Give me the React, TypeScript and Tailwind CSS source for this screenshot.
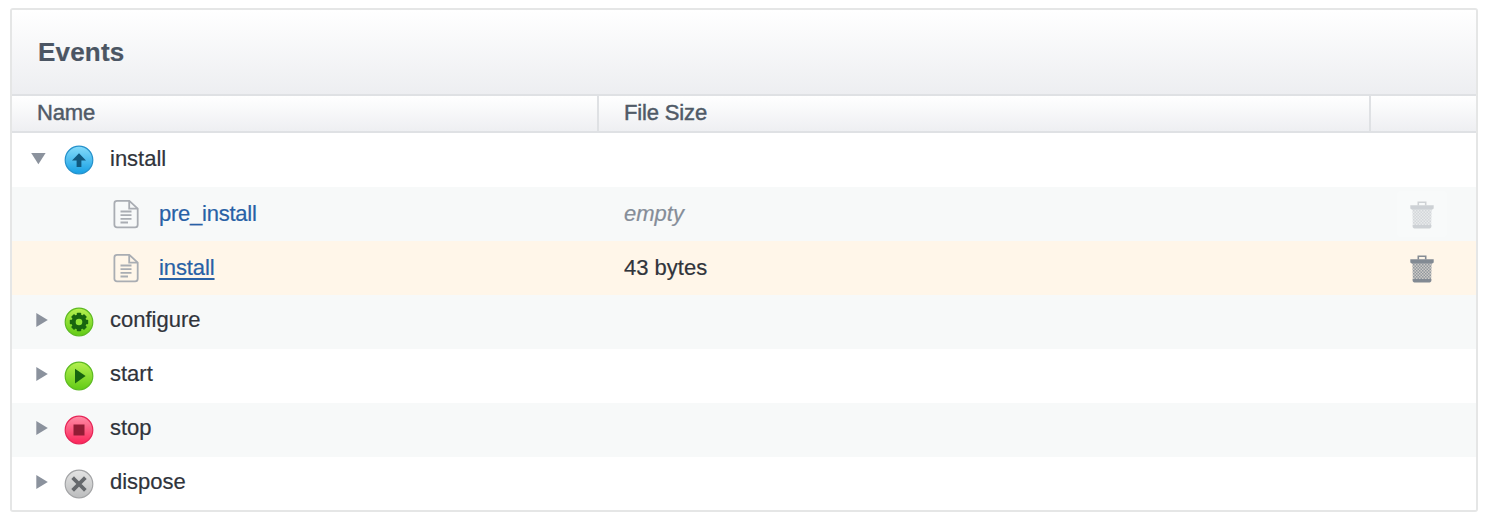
import React from "react";

type Kind = "install" | "configure" | "start" | "stop" | "dispose";

const palette: Record<Kind, { top: string; bottom: string; ring: string; mark: string }> = {
  install: { top: "#86dcfb", bottom: "#169fe4", ring: "#2591cb", mark: "#10587f" },
  configure: { top: "#b5f050", bottom: "#62cb15", ring: "#5dba22", mark: "#17640f" },
  start: { top: "#b5f050", bottom: "#62cb15", ring: "#5dba22", mark: "#17640f" },
  stop: { top: "#ff8ca5", bottom: "#fb2459", ring: "#e62557", mark: "#931c35" },
  dispose: { top: "#e3e3e3", bottom: "#bcbdbe", ring: "#a3a4a6", mark: "#65686c" },
};

function Mark({ kind, color }: { kind: Kind; color: string }) {
  switch (kind) {
    case "install":
      return <path d="M15 8.3l7 7.2h-4.6v6.6h-4.8v-6.6H8z" fill={color} />;
    case "configure":
      return (
        <g>
          {[0, 45, 90, 135].map((a) => (
            <rect key={a} x="12.8" y="5.8" width="4.4" height="18.4" rx="0.8" fill={color} transform={`rotate(${a} 15 15)`} />
          ))}
          <circle cx="15" cy="15" r="7.5" fill={color} />
          <circle cx="15" cy="15" r="3.3" fill="#8fe337" />
        </g>
      );
    case "start":
      return <path d="M11 7.8l10.6 7.2L11 22.4z" fill={color} />;
    case "stop":
      return <path d="M9.5 9.4h11v11h-11z" fill={color} />;
    case "dispose":
      return <path d="M10 10l10 10M20 10L10 20" stroke={color} strokeWidth="3.8" strokeLinecap="square" />;
  }
}

function StatusIcon({ kind }: { kind: Kind }) {
  const p = palette[kind];
  return (
    <svg viewBox="0 0 30 30" className="size-[30px] shrink-0">
      <defs>
        <linearGradient id={`disc-${kind}`} x1="0" y1="0" x2="0" y2="1">
          <stop offset="0" stopColor={p.top} />
          <stop offset="1" stopColor={p.bottom} />
        </linearGradient>
      </defs>
      <circle cx="15" cy="15" r="13.8" fill={`url(#disc-${kind})`} stroke={p.ring} strokeWidth="1.2" />
      <Mark kind={kind} color={p.mark} />
    </svg>
  );
}

function FileIcon() {
  return (
    <svg viewBox="0 0 26 30" className="h-[30px] w-[26px] shrink-0" fill="none" stroke="#a9adb3" strokeWidth="1.8">
      <path d="M4 1.8h12.3l8.4 7.9v16c0 1.6-1 2.6-2.6 2.6H4c-1.6 0-2.6-1-2.6-2.6V4.4c0-1.6 1-2.6 2.6-2.6z" />
      <path d="M16.2 2v7.7h8.3" />
      <path d="M7.5 12.5h11M7.5 16.2h11M7.5 19.9h11M7.5 23.5h7.5" />
    </svg>
  );
}

function TrashIcon({ id }: { id: string }) {
  return (
    <svg viewBox="0 0 24 28" className="h-7 w-6">
      <defs>
        <pattern id={id} width="3" height="3" patternUnits="userSpaceOnUse">
          <path d="M0 0h3v3H0z" fill="#828a93" fillOpacity="0.4" />
          <path d="M0 0h1.5v1.5H0zM1.5 1.5H3V3H1.5z" fill="#828a93" fillOpacity="0.8" />
        </pattern>
      </defs>
      <path d="M8.3 4.5V1.2h7.4v3.3" fill="none" stroke="#858c94" strokeWidth="1.6" />
      <path d="M.3 4.3h23.4v3.2l-1.8 1.3H2.1L.3 7.5z" fill="#828a93" />
      <path d="M2.4 8.8h19.2l-.4 15.4H2.8z" fill={`url(#${id})`} />
      <path d="M2.6 24h18.8v1.6c0 1-.8 1.8-1.8 1.8H4.4c-1 0-1.8-.8-1.8-1.8z" fill="#828a93" />
    </svg>
  );
}

function Arrow({ open }: { open?: boolean }) {
  return (
    <svg viewBox="0 0 18 16" className="mb-1 h-4 w-[18px] shrink-0" fill="#8b929d">
      {open ? <path d="M1.2 3h14.4L8.4 14.3z" /> : <path d="M6.3 1v14l11.5-7z" />}
    </svg>
  );
}

function GroupRow({ kind, open, shaded }: { kind: Kind; open?: boolean; shaded?: boolean }) {
  return (
    <div className={`flex h-[54px] items-center pl-[18px] ${shaded ? "bg-[#f7f9f9]" : "bg-white"}`}>
      <Arrow open={open} />
      <div className="ml-4">
        <StatusIcon kind={kind} />
      </div>
      <span className={`ml-4 leading-[26px] ${open ? "pb-[3px]" : "pb-[5px]"}`}>{kind}</span>
    </div>
  );
}

function FileRow({ name, size, active }: { name: string; size?: string; active?: boolean }) {
  return (
    <div className={`grid h-[54px] grid-cols-[586px_771px_1fr] items-center ${active ? "bg-[#fff6e9]" : "bg-[#f7f9f9]"}`}>
      <div className="flex items-center pl-[101px]">
        <FileIcon />
        <span
          className={`ml-5 pb-px leading-[26px] text-[#2861a6] ${
            active ? "tracking-[-0.1px] underline decoration-2 underline-offset-[3px]" : "tracking-[-0.25px]"
          }`}
        >
          {name}
        </span>
      </div>
      <div className="pb-px pl-[26px] leading-[26px]">
        {size ?? <em className="text-[#858d98]">empty</em>}
      </div>
      <div
        className={`ml-[28px] flex h-[46px] w-[50px] items-center justify-center rounded-sm pt-0.5 ${
          active ? "" : "bg-[#fcfdfd] opacity-35"
        }`}
      >
        <TrashIcon id={`mesh-${name}`} />
      </div>
    </div>
  );
}

export default function App() {
  return (
    <div className="h-[522px] w-[1486px] bg-white pt-2 pl-[10px] font-['Liberation_Sans',Arial,sans-serif] text-[22px] text-[#30343b] [-webkit-text-stroke:0.2px_currentColor]">
      <section className="h-[504px] w-[1468px] overflow-hidden rounded-[3px] border-2 border-[#e5e6e6]">
        <header className="flex h-[84px] items-center bg-linear-to-b from-white to-[#edeef1] pl-[26px]">
          <h1 className="text-[26px] leading-8 font-bold tracking-[0.2px] text-[#4b5563]">Events</h1>
        </header>
        <div className="grid h-[39px] grid-cols-[585px_772px_1fr] border-y-2 border-[#dfe1e4] bg-linear-to-b from-white to-[#eeeff2] leading-[34px] tracking-[-0.15px] text-[#505a67] [-webkit-text-stroke:0.45px_#505a67]">
          <div className="pl-[25px]">Name</div>
          <div className="border-l-2 border-[#dfe1e4] pl-[25px]">File Size</div>
          <div className="border-l-2 border-[#dfe1e4]" />
        </div>
        <GroupRow kind="install" open />
        <FileRow name="pre_install" />
        <FileRow name="install" size="43 bytes" active />
        <GroupRow kind="configure" shaded />
        <GroupRow kind="start" />
        <GroupRow kind="stop" shaded />
        <GroupRow kind="dispose" />
      </section>
    </div>
  );
}
